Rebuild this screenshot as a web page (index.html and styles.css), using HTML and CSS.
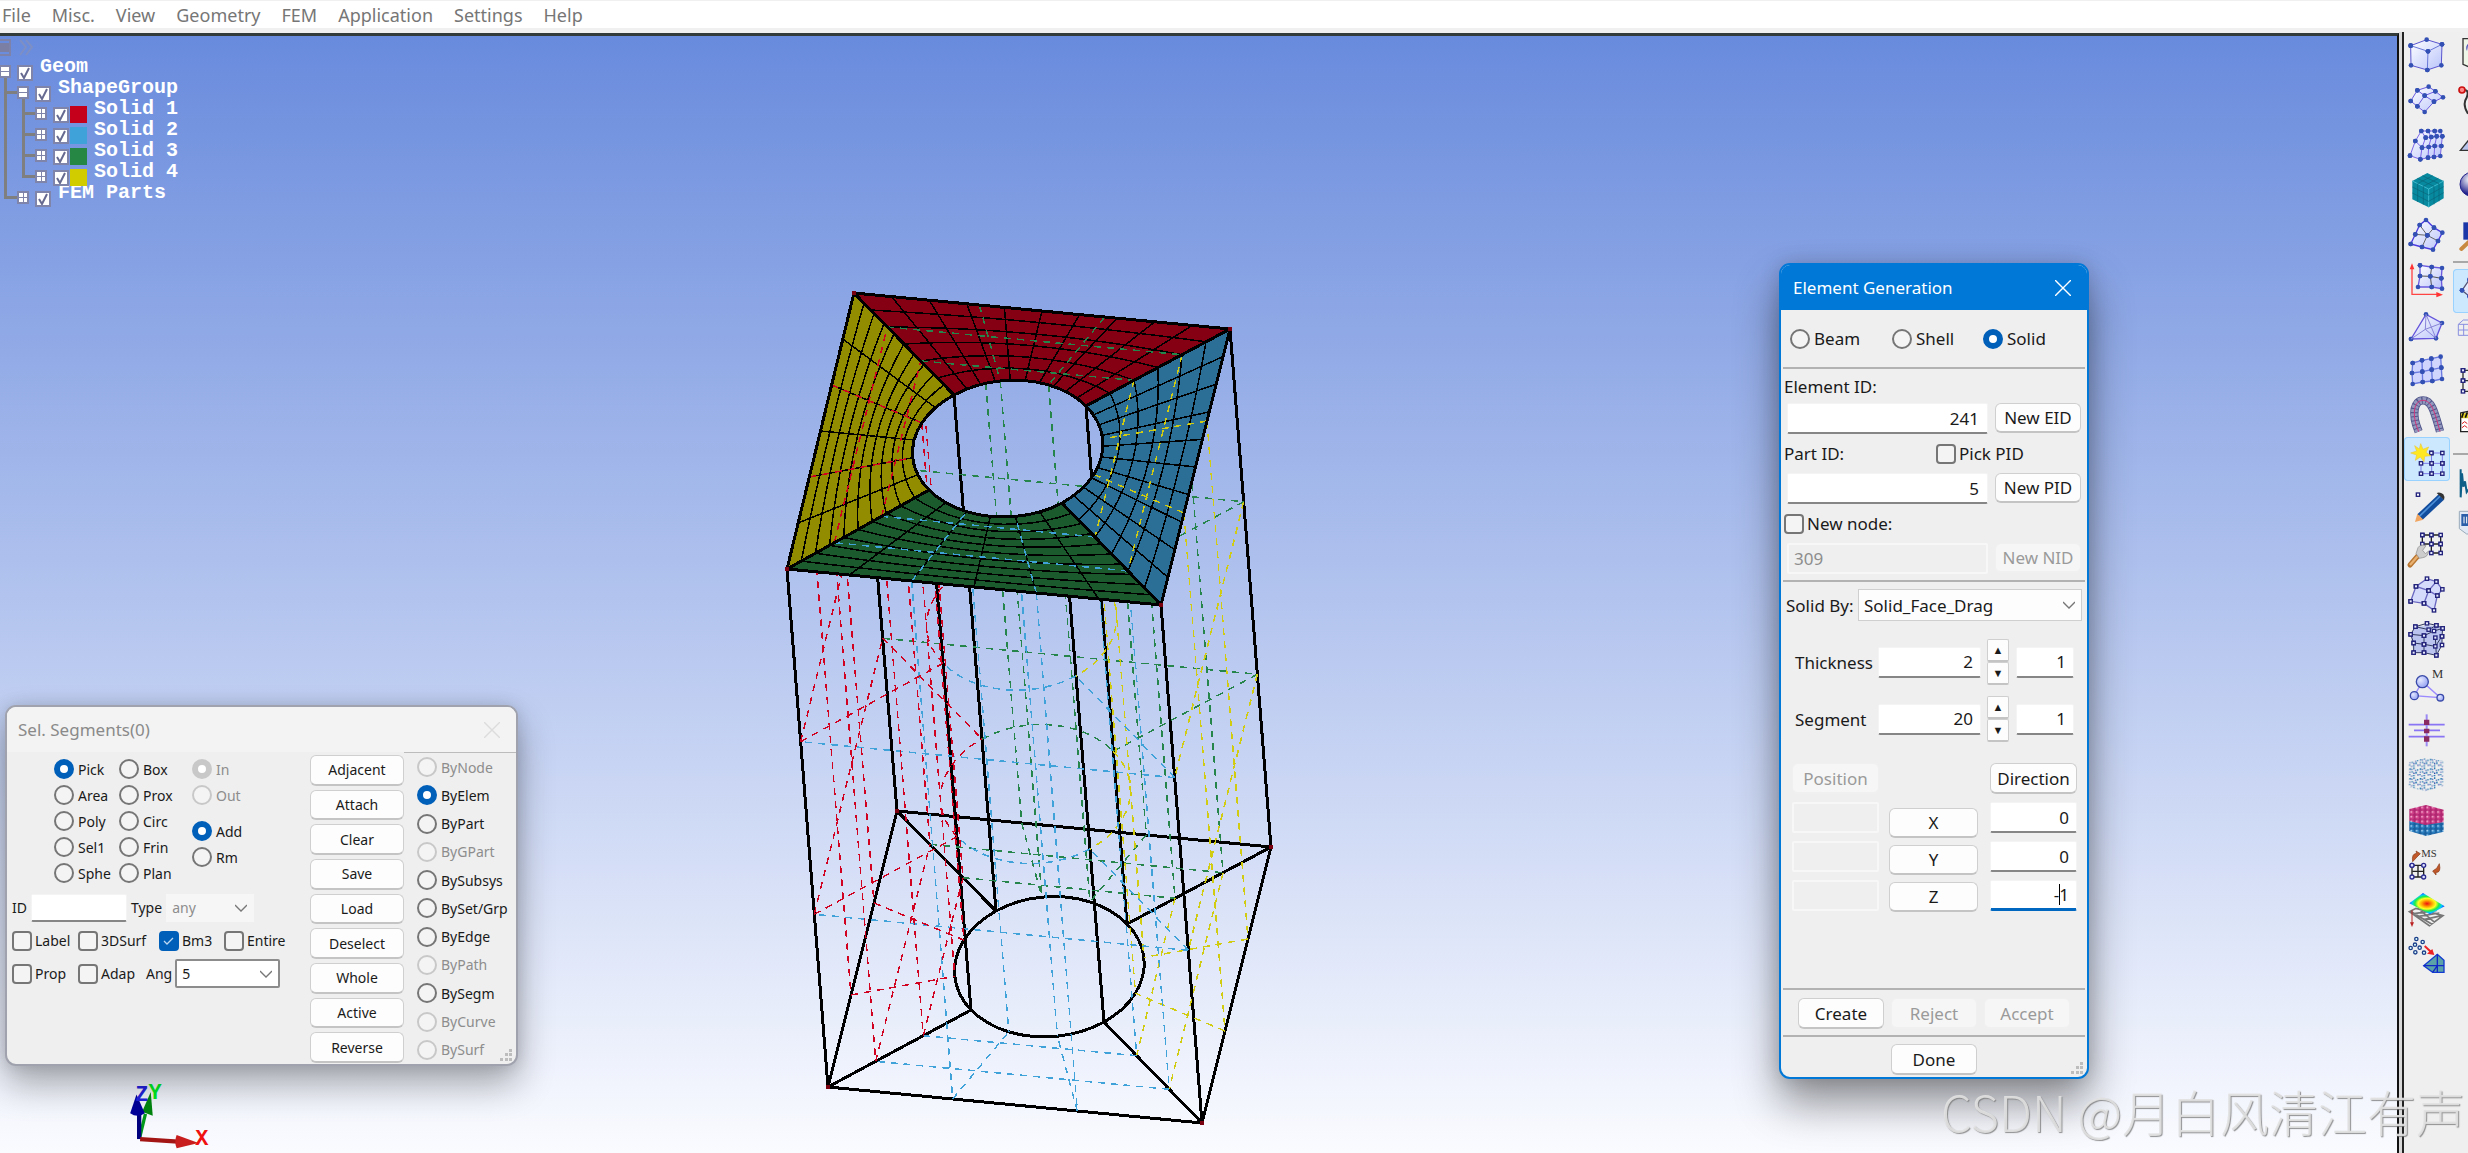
FILE: index.html
```html
<!DOCTYPE html>
<html lang="en">
<head>
<meta charset="utf-8">
<title>Element Generation</title>
<link rel="stylesheet" href="styles.css">
</head>
<body>
<nav class="menubar">
  <a href="#">File</a><a href="#">Misc.</a><a href="#">View</a><a href="#">Geometry</a><a href="#">FEM</a><a href="#">Application</a><a href="#">Settings</a><a href="#">Help</a>
</nav>
<div class="workspace">
  <main class="viewport">
    <svg class="model" id="model" viewBox="770 270 520 870" width="520" height="870" aria-label="Model"></svg>

    <div class="tree">
      <svg class="tree-head" width="36" height="21" viewBox="0 0 36 21" aria-hidden="true">
        <path d="M0 2H10V17H0" fill="none" stroke="#7d82ab" stroke-width="2"/><path d="M0 5H9V14H0Z" fill="#7b7fa3"/>
        <path d="M20 2l6 7-6 8M26 2l6 7-6 8" fill="none" stroke="#7d8fc4" stroke-width="2"/>
      </svg>
      <ul>
        <li class="branch"><div class="node"><i class="twist minus"></i><input type="checkbox" id="t1" checked><label for="t1">Geom</label></div>
          <ul>
            <li class="branch"><div class="node"><i class="twist minus"></i><input type="checkbox" id="t2" checked><label for="t2">ShapeGroup</label></div>
              <ul>
                <li><div class="node"><i class="twist"></i><input type="checkbox" id="t3" checked><b class="chip red"></b><label for="t3">Solid 1</label></div></li>
                <li><div class="node"><i class="twist"></i><input type="checkbox" id="t4" checked><b class="chip blue"></b><label for="t4">Solid 2</label></div></li>
                <li><div class="node"><i class="twist"></i><input type="checkbox" id="t5" checked><b class="chip green"></b><label for="t5">Solid 3</label></div></li>
                <li><div class="node"><i class="twist"></i><input type="checkbox" id="t6" checked><b class="chip yellow"></b><label for="t6">Solid 4</label></div></li>
              </ul>
            </li>
            <li><div class="node"><i class="twist"></i><input type="checkbox" id="t7" checked><label for="t7">FEM Parts</label></div></li>
          </ul>
        </li>
      </ul>
    </div>

    <svg class="triad" viewBox="360 1130 300 220" width="100" height="73" aria-label="Axes">
      <path d="M418 1312L436 1238" stroke="#009a1a" stroke-width="10"/><path d="M452 1172L426 1232L458 1244Z" fill="#00860f"/>
      <path d="M417 1314V1230" stroke="#00007e" stroke-width="13"/><path d="M409 1180L390 1236Q412 1252 434 1236Z" fill="#00009a"/>
      <path d="M420 1314L534 1322" stroke="#a31515" stroke-width="13"/><path d="M596 1326L530 1302Q522 1322 530 1342Z" fill="#c81e1e"/>
      <text x="405" y="1198" fill="#2222dd">Z</text><text x="445" y="1194" fill="#00ee22">Y</text><text x="586" y="1332" fill="#f01010">X</text>
    </svg>

    <section class="window seg-window">
      <header class="titlebar"><h2>Sel. Segments(0)</h2>
        <button class="close" aria-label="Close"><svg width="16" height="16" viewBox="0 0 16 16"><path d="M0 0L16 16M16 0L0 16"/></svg></button></header>
      <form class="seg-body">
        <div class="seg-left">
          <div class="modes">
            <div class="stack">
              <label><input type="radio" name="pick" checked>Pick</label><label><input type="radio" name="pick">Area</label><label><input type="radio" name="pick">Poly</label><label><input type="radio" name="pick">Sel1</label><label><input type="radio" name="pick">Sphe</label>
            </div>
            <div class="stack">
              <label><input type="radio" name="pick">Box</label><label><input type="radio" name="pick">Prox</label><label><input type="radio" name="pick">Circ</label><label><input type="radio" name="pick">Frin</label><label><input type="radio" name="pick">Plan</label>
            </div>
            <div class="stack">
              <label class="off"><input type="radio" name="io" checked disabled>In</label><label class="off"><input type="radio" name="io" disabled>Out</label>
              <label class="second"><input type="radio" name="op" checked>Add</label><label><input type="radio" name="op">Rm</label>
            </div>
          </div>
          <div class="line id-line"><label for="sid">ID</label><input class="field" type="text" id="sid"><label for="stype">Type</label><select id="stype" disabled><option>any</option></select></div>
          <div class="line checks"><label><input type="checkbox">Label</label><label><input type="checkbox">3DSurf</label><label><input type="checkbox" checked>Bm3</label><label><input type="checkbox">Entire</label></div>
          <div class="line checks"><label><input type="checkbox">Prop</label><label><input type="checkbox">Adap</label><span class="ang"><label for="ang">Ang</label><select id="ang"><option>5</option></select></span></div>
        </div>
        <div class="seg-buttons">
          <button type="button">Adjacent</button><button type="button">Attach</button><button type="button">Clear</button><button type="button">Save</button><button type="button">Load</button><button type="button">Deselect</button><button type="button">Whole</button><button type="button">Active</button><button type="button">Reverse</button>
        </div>
        <div class="seg-by">
          <label class="off"><input type="radio" name="by" disabled>ByNode</label><label><input type="radio" name="by" checked>ByElem</label><label><input type="radio" name="by">ByPart</label><label class="off"><input type="radio" name="by" disabled>ByGPart</label><label><input type="radio" name="by">BySubsys</label><label><input type="radio" name="by">BySet/Grp</label><label><input type="radio" name="by">ByEdge</label><label class="off"><input type="radio" name="by" disabled>ByPath</label><label><input type="radio" name="by">BySegm</label><label class="off"><input type="radio" name="by" disabled>ByCurve</label><label class="off"><input type="radio" name="by" disabled>BySurf</label>
        </div>
      </form>
      <svg class="grip" width="12" height="12" viewBox="0 0 12 12"><path d="M9 0h3v3H9zM5 4h3v3H5zM9 4h3v3H9zM0 9h3v3H0zM5 9h3v3H5zM9 9h3v3H9z"/></svg>
    </section>

    <section class="window elem-window">
      <header class="titlebar"><h2>Element Generation</h2>
        <button class="close" aria-label="Close"><svg width="16" height="16" viewBox="0 0 16 16"><path d="M0 0L16 16M16 0L0 16"/></svg></button></header>
      <form class="elem-body">
        <div class="kinds"><label><input type="radio" name="kind">Beam</label><label><input type="radio" name="kind">Shell</label><label><input type="radio" name="kind" checked>Solid</label></div>
        <hr>
        <div class="caption"><label for="eid">Element ID:</label></div>
        <div class="entry"><input class="field" type="text" id="eid" value="241"><button type="button">New EID</button></div>
        <div class="caption part"><label for="pid">Part ID:</label><label><input type="checkbox">Pick PID</label></div>
        <div class="entry"><input class="field" type="text" id="pid" value="5"><button type="button">New PID</button></div>
        <div class="caption part"><label><input type="checkbox">New node:</label></div>
        <div class="entry"><input class="field nid" type="text" value="309" aria-label="Node ID" disabled><button type="button" disabled>New NID</button></div>
        <hr class="after-entry">
        <div class="solid-by"><label for="sby">Solid By:</label><select id="sby"><option>Solid_Face_Drag</option></select></div>
        <div class="amount"><label for="thk">Thickness</label><input class="field" type="text" id="thk" value="2"><span class="spin"><button type="button" aria-label="Up">▲</button><button type="button" aria-label="Down">▼</button></span><input class="field step" type="text" value="1" aria-label="Thickness step"></div>
        <div class="amount"><label for="sgm">Segment</label><input class="field" type="text" id="sgm" value="20"><span class="spin"><button type="button" aria-label="Up">▲</button><button type="button" aria-label="Down">▼</button></span><input class="field step" type="text" value="1" aria-label="Segment step"></div>
        <div class="vector">
          <div class="vcol"><button type="button" disabled>Position</button><input class="field" type="text" aria-label="Position X" disabled><input class="field" type="text" aria-label="Position Y" disabled><input class="field" type="text" aria-label="Position Z" disabled></div>
          <div class="vcol axes"><button type="button">X</button><button type="button">Y</button><button type="button">Z</button></div>
          <div class="vcol"><button type="button">Direction</button><input class="field" type="text" value="0" aria-label="Direction X"><input class="field" type="text" value="0" aria-label="Direction Y"><span class="active-field"><input class="field" type="text" value="-1" aria-label="Direction Z"></span></div>
        </div>
        <hr>
        <div class="actions"><button type="button">Create</button><button type="button" disabled>Reject</button><button type="button" disabled>Accept</button></div>
        <hr>
        <div class="actions done"><button type="button">Done</button></div>
      </form>
      <svg class="grip" width="12" height="12" viewBox="0 0 12 12"><path d="M9 0h3v3H9zM5 4h3v3H5zM9 4h3v3H9zM0 9h3v3H0zM5 9h3v3H5zM9 9h3v3H9z"/></svg>
    </section>
  </main>

  <aside class="toolbars">
    <svg width="0" height="0" class="defs" aria-hidden="true"><defs>
      <marker id="dot" markerUnits="userSpaceOnUse" viewBox="-10 -10 20 20" markerWidth="20" markerHeight="20"><circle r="7" fill="#3350b4"/></marker>
      <marker id="sq" markerUnits="userSpaceOnUse" viewBox="-10 -10 20 20" markerWidth="20" markerHeight="20"><rect x="-5" y="-5" width="10" height="10" fill="#e8ebfb" stroke="#25257e" stroke-width="4"/></marker>
      <marker id="ring" markerUnits="userSpaceOnUse" viewBox="-10 -10 20 20" markerWidth="20" markerHeight="20"><circle r="6" fill="#dfe3ff" stroke="#2a2a90" stroke-width="4"/></marker>
      <linearGradient id="lav" x1="0" y1="0" x2="1" y2="1"><stop offset="0" stop-color="#fff"/><stop offset="1" stop-color="#b9c4fa"/></linearGradient>
      <radialGradient id="ball" cx=".35" cy=".35" r=".7"><stop offset="0" stop-color="#fff"/><stop offset="1" stop-color="#3c3ca8"/></radialGradient>
      <radialGradient id="orb" cx=".4" cy=".3" r=".6"><stop offset="0" stop-color="#fff"/><stop offset="1" stop-color="#20208c"/></radialGradient>
      <radialGradient id="bead" cx=".35" cy=".35" r=".9"><stop offset="0" stop-color="#e4e9ff"/><stop offset="1" stop-color="#7d8ef0"/></radialGradient>
      <radialGradient id="heat"><stop offset="0" stop-color="#e11"/><stop offset=".3" stop-color="#fa0"/><stop offset=".5" stop-color="#ff2"/><stop offset=".68" stop-color="#2e4"/><stop offset=".85" stop-color="#0cf"/><stop offset="1" stop-color="#14f"/></radialGradient>
      <pattern id="specks" width="31" height="29" patternUnits="userSpaceOnUse"><path d="M2 3h5v5H2zM14 1h4v5h-4zM25 6h4v4h-4zM8 12h5v4H8zM20 14h5v5h-5zM1 20h4v4H1zM13 23h5v4h-5z" fill="#1f76b0"/><path d="M8 5h4v3H8zM19 8h4v3h-4zM2 13h3v4H2zM14 16h4v4h-4zM26 21h4v4h-4zM7 25h3v3H7z" fill="#2440a8"/></pattern>
      <pattern id="pinkballs" width="16" height="14" patternUnits="userSpaceOnUse"><rect width="16" height="14" fill="#b02670"/><circle cx="8" cy="7" r="6" fill="#cf3f88"/><circle cx="6" cy="5" r="3" fill="#f3a8cb"/></pattern>
      <pattern id="blueballs" width="16" height="14" patternUnits="userSpaceOnUse"><rect width="16" height="14" fill="#1a5f9e"/><circle cx="8" cy="7" r="6" fill="#2a80c0"/><circle cx="6" cy="5" r="3" fill="#9ccbef"/></pattern>
    </defs></svg>
    <div class="tools">
      <button aria-label="Solid"><svg viewBox="48 33 138 132"><path class="d" d="M68 74L116 56L162 70L160 133L118 147L69 133Z" fill="url(#lav)" stroke="#5a55d0" stroke-width="3"/><path class="d" d="M68 74L120 91L162 70M120 91L118 147" fill="none" stroke="#6a78d8" stroke-width="3"/></svg></button>
      <button aria-label="Surface"><svg viewBox="48 168 138 132"><path class="d" d="M68 240L88 208L122 197L142 211L165 229L138 242L110 273L88 256Z" fill="url(#lav)" stroke="#6a5ae0" stroke-width="3"/><path class="d" d="M88 208L110 224L138 242M88 256L110 224L142 211" fill="none" stroke="#6a5ae0" stroke-width="3"/></svg></button>
      <button aria-label="Block mesh"><svg viewBox="48 303 138 132"><path class="d" d="M66 404L82 360L100 330L120 330L140 330L157 330L163 346L160 375L157 405L138 408L120 410L97 415Z" fill="url(#lav)" stroke="#7a64e8" stroke-width="3"/><path class="d" d="M82 360L102 380L122 378L140 375L160 375M100 330L113 350L130 348L146 346L163 346M97 415L102 380L113 350M120 410L122 378L130 348L120 330M138 408L140 375L146 346L140 330" fill="none" stroke="#7a64e8" stroke-width="3"/></svg></button>
      <button aria-label="Hexa block"><svg viewBox="48 438 138 132"><path d="M73 480L118 456L167 480V532L122 559L73 535Z" fill="#07899f"/><path d="M73 480L122 504L167 480M122 504V559" fill="none" stroke="#3bb8cc" stroke-width="3"/><path d="M88 472L138 496M103 464L153 488M89 488L134 464M106 496L151 472M73 498L122 522L167 497M73 516L122 541L167 515M89 488V543M106 496V551M138 496V550M153 488V541" stroke="#0a6578" stroke-width="2" fill="none"/></svg></button>
      <button aria-label="Patch"><svg viewBox="48 573 138 132"><path class="d" d="M68 669L82 640L95 612L114 597L138 620L163 635L150 660L135 686L102 678Z" fill="url(#lav)" stroke="#4a3ae0" stroke-width="4"/><path class="d" d="M95 612L118 643L150 660M118 643L102 678M138 620L118 643L82 640" fill="none" stroke="#666" stroke-width="3"/></svg></button>
      <button aria-label="Mesh on axes"><svg viewBox="48 708 138 132"><path class="d" d="M96 733L131 738L162 741L160 772L162 803L131 798L90 798L96 765Z" fill="url(#lav)" stroke="#6a5ae0" stroke-width="4"/><path class="d" d="M96 765L127 766L160 772M131 738L127 766L131 798" fill="none" stroke="#555" stroke-width="3"/><path d="M72 740V820H148" fill="none" stroke="#f44" stroke-width="4"/><path d="M72 727l-7 18h14zM165 821l-20-8v16z" fill="#f33"/></svg></button>
      <button aria-label="Tetra"><svg viewBox="48 843 138 132"><path class="d" d="M69 954L114 880L162 906L144 952Z" fill="url(#lav)" stroke="#6454dc" stroke-width="4"/><path d="M69 954L112 925L162 906M114 880L144 952M114 880L112 925L144 952" fill="none" stroke="#8a86d8" stroke-width="3"/></svg></button>
      <button aria-label="Shell mesh"><svg viewBox="48 18 138 132"><path class="d" d="M74 66L102 58L130 53L158 47L160 80L162 114L133 120L104 123L74 129L72 96Z" fill="#cfd5fd" stroke="#6a7ae0" stroke-width="4"/><path class="d" d="M72 96L103 92L131 86L160 80M102 58L103 92L104 123M130 53L131 86L133 120" fill="none" stroke="#6a7ae0" stroke-width="4"/></svg></button>
      <button aria-label="Pipe"><svg viewBox="48 153 138 132"><path d="M92 272C68 215 80 178 105 178C132 178 140 215 156 271" fill="none" stroke="#50558a" stroke-width="25"/><path d="M92 272C68 215 80 178 105 178C132 178 140 215 156 271" fill="none" stroke="#9297bd" stroke-width="20" stroke-dasharray="9 3"/><path d="M92 272C68 215 80 178 105 178C132 178 140 215 156 271" fill="none" stroke="#d2347a" stroke-width="3"/></svg></button>
      <button class="on" aria-label="Element generation"><svg viewBox="48 288 138 132"><path class="s" d="M130 336L163 336L163 367L163 398L131 398L99 398L99 367L131 367L163 367M130 336L131 367L131 398" fill="none" stroke="#7b7be8" stroke-width="3"/><path d="M98 308L105 325L122 318L114 334L128 344L110 346L108 362L97 348L82 358L86 342L68 336L86 330L80 314L94 324Z" fill="#ffe820" stroke="#e8c840" stroke-width="2"/></svg></button>
      <button aria-label="Edit node"><svg viewBox="48 423 138 132"><rect x="85" y="456" width="10" height="10" fill="#fff" stroke="#25257e" stroke-width="4"/><path d="M152 460L168 476L104 536L88 520Z" fill="#124c9c"/><path d="M157 465L94 526" stroke="#4b8fd8" stroke-width="5"/><path d="M146 456Q156 452 166 460Q172 468 168 477Z" fill="#333"/><path d="M88 518L81 543L106 536Z" fill="#f0a560"/></svg></button>
      <button aria-label="Repair mesh"><svg viewBox="48 558 138 132"><path class="s" d="M103 582L130 582L158 582L158 609L158 636L130 636L130 609L158 609M103 582L103 609L130 609L130 582" fill="none" stroke="#222" stroke-width="4"/><path d="M66 672L92 642" stroke="#b87530" stroke-width="15" stroke-linecap="round"/><path d="M66 672L92 642" stroke="#e8b070" stroke-width="7"/><path d="M84 638L90 620Q98 608 114 614L104 628L112 638L122 630Q120 648 104 650L94 652Z" fill="#ccc" stroke="#888" stroke-width="2"/></svg></button>
      <button aria-label="Shell patch"><svg viewBox="48 693 138 132"><path class="s" d="M68 781L84 736L117 713L145 722L163 745L148 764L138 808L108 787Z" fill="#d5dbfb" stroke="#6a68c0" stroke-width="4"/><path class="s" d="M84 736L122 749L148 764M122 749L108 787M122 749L145 722" fill="none" stroke="#6a68c0" stroke-width="4"/></svg></button>
      <button aria-label="Solid mesh"><svg viewBox="48 828 138 132"><path d="M77 935L68 880L82 857L145 853L164 862L162 912L145 943L108 935Z" fill="#bac4ee"/><path class="s" d="M77 935L77 906L68 880L82 857L117 847L145 853L164 862L162 886L162 912L145 943L108 935L77 935M68 880L108 884L138 870L164 862M108 935L108 910L108 884M77 906L108 910L142 916L162 886M145 943L142 890M82 857L122 866L145 853" fill="none" stroke="#333a60" stroke-width="3"/></svg></button>
      <button aria-label="Mass"><svg viewBox="48 3 138 132"><path d="M103 62L79 104L157 110Z" fill="none" stroke="#9b8bff" stroke-width="4"/><g fill="url(#bead)" stroke="#3a4aa8" stroke-width="4"><circle cx="103" cy="62" r="18"/><circle cx="79" cy="104" r="12"/><circle cx="157" cy="110" r="10"/></g><text x="132" y="52" font-size="38">M</text></svg></button>
      <button aria-label="Align"><svg viewBox="48 138 138 132"><path d="M62 191H170M78 208H156M62 227H170" stroke="#8a76f4" stroke-width="5"/><path d="M116 160V256" stroke="#9b8bf4" stroke-width="6"/><path d="M108 176h16v16h-16zM108 203h16v14h-16zM108 226h16v16h-16z" fill="#8a2a62"/></svg></button>
      <button aria-label="Particles"><svg viewBox="48 273 138 132"><path d="M62 303L118 290L166 300V376L112 391L62 378Z" fill="url(#specks)"/></svg></button>
      <button aria-label="Layers"><svg viewBox="48 408 138 132"><path d="M64 444L114 432L167 446V484L112 494L64 480Z" fill="url(#pinkballs)"/><path d="M64 480L112 492L167 484V512L114 525L64 510Z" fill="url(#blueballs)"/></svg></button>
      <button aria-label="Mesh swap"><svg viewBox="48 543 138 132"><path d="M74 602Q70 578 86 577L84 570L97 578L87 588Z" fill="#c0582a" stroke="#8a3a15" stroke-width="2"/><path d="M154 608Q160 636 144 634L144 642L134 630L146 622Z" fill="#c0582a" stroke="#8a3a15" stroke-width="2"/><path d="M90 614V648M73 631H107" stroke="#222" stroke-width="4"/><path class="r" d="M72 613L107 613L107 648L72 648Z" fill="none" stroke="#222" stroke-width="4"/><text x="100" y="588" font-size="32">MS</text></svg></button>
      <button aria-label="Contour"><svg viewBox="48 678 138 132"><path d="M64 752L84 742L165 764L124 794ZM78 758L146 748M92 766L154 756M106 776L162 764M90 742L140 784M70 752L132 790" fill="none" stroke="#777" stroke-width="5"/><path d="M105 696L170 736L126 760L64 727Z" fill="url(#heat)"/><path d="M72 748V788" stroke="#b22" stroke-width="3"/><path d="M72 798l-6-14h12z" fill="#b22"/></svg></button>
      <button aria-label="Points to mesh"><svg viewBox="48 813 138 132"><g fill="#dff" stroke="#1d3f8a" stroke-width="4"><circle cx="85" cy="834" r="5"/><circle cx="104" cy="843" r="5"/><circle cx="81" cy="851" r="5"/><circle cx="68" cy="861" r="5"/><circle cx="95" cy="860" r="5"/><circle cx="82" cy="874" r="5"/><circle cx="108" cy="875" r="5"/></g><path d="M110 855L130 874" stroke="#e22" stroke-width="6"/><path d="M139 882l-22-4 16-14z" fill="#e22"/><path d="M107 914L148 880L168 898V934H134Z" fill="#5aa2a8" stroke="#123ad0" stroke-width="4"/><path d="M107 914H168M148 880V934M148 914L134 934" fill="none" stroke="#1226c8" stroke-width="4"/></svg></button>
    </div>
    <div class="tools">
      <button aria-label="View"><svg viewBox="195 33 138 132"><path d="M300 53H225V130L252 142" fill="#eef6e8" stroke="#333" stroke-width="4"/><path d="M240 68q-8 8-3 22" fill="#22a" /></svg></button>
      <button aria-label="Curve"><svg viewBox="195 168 138 132"><path d="M222 208Q246 202 236 230Q222 250 240 278" fill="none" stroke="#333" stroke-width="6"/><circle cx="222" cy="207" r="9" fill="#f88" stroke="#c11" stroke-width="5"/></svg></button>
      <button aria-label="Plane"><svg viewBox="195 303 138 132"><path d="M217 388L246 352L300 388Z" fill="#b9c4ec" stroke="#333" stroke-width="4"/></svg></button>
      <button aria-label="Sphere"><svg viewBox="195 438 138 132"><circle cx="252" cy="490" r="36" fill="url(#orb)" stroke="#26268c" stroke-width="3"/></svg></button>
      <button aria-label="Measure"><svg viewBox="195 573 138 132"><path d="M226 604H300V656H226Z" fill="#1c38a8"/><path d="M220 684L246 660" stroke="#c88a40" stroke-width="12" stroke-linecap="round"/></svg></button>
      <hr>
      <button class="on" aria-label="Mesh"><svg viewBox="195 744 138 132"><path class="d" d="M222 808L244 776L280 800L244 826Z" fill="url(#lav)" stroke="#557" stroke-width="4"/></svg></button>
      <button aria-label="Cage"><svg viewBox="195 879 138 132"><path d="M211 910H260M211 910V943H260M211 927H260M227 910V943M211 910L226 897H260" fill="none" stroke="#8a90e0" stroke-width="3"/></svg></button>
      <button aria-label="Nodes"><svg viewBox="195 54 138 132"><path class="s" d="M225 88L260 88M225 88L225 119L260 119M225 119L225 151L260 151" fill="none" stroke="#333" stroke-width="4"/></svg></button>
      <button aria-label="Animation"><svg viewBox="195 189 138 132"><path d="M218 216L246 210V272H218Z" fill="#fff" stroke="#222" stroke-width="4"/><path d="M219 232V218L244 214V232Z" fill="#dc2"/><path d="M226 216l-5 14M238 214l-6 16" stroke="#111" stroke-width="5"/><path d="M222 248l8-6 8 6M222 260l8-6 8 6" fill="none" stroke="#d22" stroke-width="3"/></svg></button>
      <hr>
      <button aria-label="Plot"><svg viewBox="195 363 138 132"><path d="M218 388V472L222 400L226 440L231 424L236 456L244 446" fill="none" stroke="#0d5f88" stroke-width="6"/></svg></button>
      <button aria-label="Report"><svg viewBox="195 498 138 132"><path d="M214 514H260V582H236L214 566Z" fill="#dfe8f4" stroke="#9ab" stroke-width="3"/><path d="M220 522H260V558H220Z" fill="#2a5ea8"/><path d="M228 530v20M236 530v20" stroke="#fff" stroke-width="3"/></svg></button>
    </div>
  </aside>
</div>
<div class="watermark">CSDN @月白风清江有声</div>
<script src="model.js"></script>
</body>
</html>
```
FILE: styles.css
```css
* { box-sizing: border-box; }
body {
  margin: 0;
  height: 100vh;
  overflow: hidden;
  position: relative;
  display: flex;
  flex-direction: column;
  background: #f0f0f0;
  color: #1a1a1a;
  font-family: "Noto Sans", "Open Sans", sans-serif;
}
ul { list-style: none; margin: 0; padding: 0; }
button, input, select { font: inherit; color: inherit; margin: 0; }

.menubar {
  height: 28px;
  display: flex;
  align-items: center;
  gap: 21px;
  padding: 1px 2px 0;
  background: #fff;
  border-top: 1px solid #f0f0f0;
  font-size: 18px;
}
.menubar a { color: #767676; text-decoration: none; }

.workspace { flex: 1; min-height: 0; display: flex; margin-top: 5px; }
.viewport {
  flex: 1;
  position: relative;
  overflow: hidden;
  border-top: 3px solid #333a3a;
  border-right: 2px solid #111;
  background: linear-gradient(#698bdd, #fafbff);
}

/* model tree */
.tree { position: absolute; left: 0; top: 2px; color: #fff; font: bold 20px/21px "Liberation Mono", monospace; }
.tree-head { display: block; }
.node { display: flex; height: 21px; align-items: flex-start; }
.tree label { margin-left: 7px; margin-top: -3px; }
.tree .branch { position: relative; }
.tree ul ul { padding-left: 18px; }
.tree > ul { margin-left: -1px; }
.twist {
  width: 12px; height: 13px; margin: 6px 6px 0 0;
  border: 2px solid #7f84aa;
  background: linear-gradient(#7f84aa, #7f84aa) center / 100% 1px no-repeat, linear-gradient(#7f84aa, #7f84aa) center / 1px 100% no-repeat, #fff;
  position: relative;
}
.twist.minus { background: linear-gradient(#7f84aa, #7f84aa) center / 100% 1px no-repeat, #fff; }
.twist::before { content: ""; position: absolute; right: 10px; top: 3px; width: 11px; height: 3px; background: #7f7f80; }
.tree > ul > li > .node .twist::before { display: none; }
.branch > ul { position: relative; }
.branch > ul::before { content: ""; position: absolute; left: 5px; top: -2px; bottom: 7px; width: 3px; background: #7f7f80; }
.tree input {
  appearance: none;
  width: 16px; height: 16px; margin-top: 6px;
  border: 2px solid #7f84aa;
  background: #fff url("data:image/svg+xml,%3Csvg xmlns='http://www.w3.org/2000/svg' viewBox='0 0 12 12'%3E%3Cpath d='M2 6l3 5 5-10' fill='none' stroke='%23666a90' stroke-width='2'/%3E%3C/svg%3E") center / 100% 100%;
}
.chip { width: 17px; height: 17px; margin: 5px 0 0 1px; }
.chip.red { background: #c4001a; }
.chip.blue { background: #3fa2d8; }
.chip.green { background: #268644; }
.chip.yellow { background: #d0cc00; }

.model { position: absolute; left: 770px; top: 234px; shape-rendering: crispEdges; fill: none; }
.model .edge { stroke: #000; stroke-width: 3; }
.model .grid { stroke: #000; stroke-width: 1.5; }
.model .dash { stroke-width: 1.5; stroke-dasharray: 7 6; }
.triad { position: absolute; left: 120px; bottom: 2px; }
.triad text { font: bold 66px "Liberation Mono", monospace; }

/* windows */
.window { position: absolute; display: flex; flex-direction: column; border-radius: 11px; overflow: hidden; background: #efefef; }
.titlebar { height: 47px; display: flex; align-items: center; justify-content: space-between; }
.titlebar h2 { margin: 0; font-size: 17px; font-weight: 400; }
.close { border: 0; background: none; padding: 0 16px; display: flex; }
.close path { stroke: currentColor; stroke-width: 1.4; }
.grip { position: absolute; right: 4px; bottom: 3px; fill: #bdbdbd; }

.window label { display: flex; align-items: center; white-space: nowrap; }
.window .off { color: #8d8d8d; }
input[type=radio], .window input[type=checkbox] { appearance: none; flex: none; width: 20px; height: 20px; margin: 0 4px 0 0; border: 2px solid #767676; background: #f4f4f4; }
input[type=radio] { border-radius: 50%; }
input[type=radio]:checked { border: 6px solid #005fb8; background: #fff; }
input[type=radio]:disabled { border-color: #c8c8c8; }
.window input[type=checkbox] { border-radius: 4px; margin-right: 3px; }
.window input[type=checkbox]:checked {
  border-color: #005fb8;
  background: #005fb8 url("data:image/svg+xml,%3Csvg xmlns='http://www.w3.org/2000/svg' viewBox='0 0 16 16'%3E%3Cpath d='M3 8l3 3 6-6' fill='none' stroke='%23bcd8f2' stroke-width='1.3'/%3E%3C/svg%3E");
}
.window form button { border: 1px solid #cfcfcf; border-bottom: 2px solid #c4c4c4; border-radius: 6px; background: #fdfdfd; padding: 0; }
.window form button:disabled { color: #9a9a9a; background: #f6f6f6; border-color: #f0f0f0; }
.field { border: 1px solid #f4f4f4; border-bottom: 2px solid #868686; border-radius: 2px; background: #fff; min-width: 0; outline: 0; }
.field:disabled { background: #efefef; border: 2px solid #f7f7f7; color: #8d8d8d; }
.window select {
  appearance: none;
  border: 1px solid #cfcfcf;
  background: #fdfdfd url("data:image/svg+xml,%3Csvg xmlns='http://www.w3.org/2000/svg' viewBox='0 0 12 8'%3E%3Cpath d='M0 1l6 6 6-6' fill='none' stroke='%23777' stroke-width='1.3'/%3E%3C/svg%3E") right 6px center / 12px 8px no-repeat;
  padding: 0 5px;
}
.window select:disabled { color: #8d8d8d; background-color: #f6f6f6; border-color: #f6f6f6; opacity: 1; }

.seg-window {
  left: 5px; bottom: 87px; width: 513px; height: 361px;
  border: 2px solid #a0a3ae;
  font-size: 14px;
  box-shadow: 0 18px 36px rgba(0, 0, 0, .32), 0 0 16px rgba(0, 0, 0, .12);
}
.seg-window .titlebar { background: #f3f3f3; color: #8a8a8a; padding-left: 11px; height: 45px; }
.seg-window .close { color: #dcdcdc; }
.seg-body { flex: 1; display: flex; min-height: 0; }
.seg-left { width: 303px; display: flex; flex-direction: column; padding: 4px 0 0 5px; }
.modes { display: flex; padding-left: 42px; height: 130px; margin-bottom: 5px; }
.stack { width: 65px; display: flex; flex-direction: column; }
.stack + .stack + .stack { margin-left: 8px; }
.stack label { height: 26px; }
.stack .second { margin-top: 10px; }
.line { display: flex; align-items: center; height: 33px; }
.id-line .field { width: 96px; height: 28px; margin: 0 4px; }
.id-line select { width: 88px; height: 28px; margin-left: 4px; }
.checks { display: grid; grid-template-columns: 66px 81px 65px auto; }
.ang { display: flex; grid-column: 3 / span 2; margin-left: -13px; gap: 3px; }
.ang select { width: 105px; height: 29px; border: 2px solid #8c8c8c; border-radius: 2px; background-color: #fff; }
.seg-buttons { width: 94px; display: flex; flex-direction: column; gap: 4px; padding: 3px 0 1px; }
.seg-buttons button { flex: 1; }
.seg-by { flex: 1; padding-left: 13px; display: flex; flex-direction: column; border-top: 1px solid #bcbcbc; }
.seg-by label { flex: 1; }

.elem-window {
  right: 308px; top: 227px; width: 310px;
  border: 2px solid #0078d7;
  font-size: 17px;
  box-shadow: 0 24px 44px rgba(0, 0, 0, .42), 0 0 20px rgba(0, 0, 0, .15);
}
.elem-window .titlebar { background: #0078d7; color: #fff; height: 45px; padding-left: 12px; }
.elem-body { display: flex; flex-direction: column; }
.elem-window hr { width: 302px; margin: 0 2px; border: 0; border-top: 2px solid #b2b2b2; }
.kinds { height: 57px; display: grid; grid-template-columns: 102px 91px auto; padding-left: 9px; }
.caption { height: 34px; display: flex; align-items: center; padding-left: 3px; }
.part { height: 39px; display: grid; grid-template-columns: 152px auto; }
.entry { display: flex; gap: 7px; padding-left: 6px; height: 31px; }
.entry .field { width: 201px; text-align: right; padding: 0 8px; }
.entry .nid { text-align: left; padding: 0 5px; }
.entry button { width: 86px; height: 30px; }
.elem-window .after-entry { margin-top: 6px; }
.solid-by { display: flex; height: 32px; margin-top: 7px; padding-left: 5px; }
.solid-by label { width: 72px; }
.solid-by select { width: 224px; }
.amount { display: flex; align-items: center; height: 46px; margin-top: 11px; padding-left: 14px; }
.solid-by + .amount { margin-top: 18px; }
.amount label { width: 83px; }
.amount .field { width: 103px; height: 31px; text-align: right; padding: 0 7px; }
.amount .step { width: 58px; }
.spin { width: 22px; height: 46px; margin: 0 7px 0 6px; display: flex; flex-direction: column; }
.window .spin button { flex: 1; border-radius: 2px; font-size: 11px; line-height: 12px; }
.vector { display: flex; padding-left: 11px; margin: 21px 0 76px; height: 149px; }
.vcol { width: 87px; display: flex; flex-direction: column; gap: 8px; }
.vcol > * { height: 31px; width: 100%; }
.vcol .field { text-align: right; padding: 0 7px; height: 31px; width: 100%; }
.axes { width: 89px; margin: 0 12px 0 10px; gap: 7px; justify-content: flex-end; }
.axes button { height: 30px; }
.active-field { position: relative; display: flex; }
.vcol .active-field .field { border-bottom: 3px solid #0067c0; }
.active-field::after { content: ""; position: absolute; right: 17px; top: 4px; width: 1px; height: 21px; background: #000; }
.actions { display: flex; gap: 7px; padding: 8px 17px 0; height: 45px; }
.actions button { width: 86px; height: 31px; }
.done { justify-content: center; height: 40px; padding-top: 7px; }

/* tool columns on the right edge */
.toolbars { width: 69px; display: flex; overflow: hidden; background: linear-gradient(90deg, #d8d8d8 3px, #222 3px, #222 5px, #efefef 5px); padding-left: 5px; margin-top: -1px; }
.defs { position: absolute; }
.tools { width: 46px; flex: none; display: flex; flex-direction: column; margin-right: 3px; gap: 1px; }
.tools button { width: 46px; height: 44px; flex: none; padding: 0; border: 0; background: none; border-radius: 4px; }
.tools button.on { background: #cce8ff; box-shadow: inset 0 0 0 1px #99d1ff; }
.tools svg { display: block; width: 46px; height: 44px; }
.tools text { font-family: "Liberation Serif", serif; fill: #333; }
.tools hr { width: 46px; margin: 4px 0 5px; border: 0; border-top: 2px solid #a8a8a8; }
.d { marker: url(#dot); }
.s { marker: url(#sq); }
.r { marker: url(#ring); }

.watermark {
  position: absolute; right: 3px; bottom: 8px;
  font: 300 49px/68px "Noto Sans CJK SC", sans-serif;
  color: rgba(226, 226, 226, .9);
  text-shadow: 1px 1px 1px rgba(120, 120, 120, .8);
  pointer-events: none;
}
```
FILE: model.js
```js
// Prism with a cylindrical hole, split into four sectors.
// Corners run A, B, C, D clockwise from the upper left; hole points share the order.
const top0 = {
  corner: [[854, 293], [1230, 329], [1161, 605], [787, 569]],
  hole: [[954, 395], [1086, 406], [1062, 503], [929, 490]],
};
const base = {
  corner: [[897, 811], [1271, 847], [1202, 1123], [828, 1087]],
  hole: [[996, 911], [1127, 924], [1104, 1022], [971, 1010]],
};
const sectors = [
  { fill: '#850013', dash: '#26854a', around: 10, radial: 6 },
  { fill: '#2c6f96', dash: '#d2cc10', around: 10, radial: 6 },
  { fill: '#1b5a2d', dash: '#3fa2d8', around: 6, radial: 10 },
  { fill: '#928c00', dash: '#d0021f', around: 6, radial: 10 },
];

const mix = (p, q, t) => [p[0] + (q[0] - p[0]) * t, p[1] + (q[1] - p[1]) * t];
const range = (n) => Array.from({ length: n + 1 }, (_, i) => i / n);
const path = (pts) => 'M' + pts.map((p) => p.map((v) => v.toFixed(1)).join(' ')).join('L');

function edge(level, k, s) {
  return mix(level.corner[k], level.corner[(k + 1) % 4], s);
}
function arc(level, k, s) {
  const h = level.hole;
  const cx = (h[0][0] + h[1][0] + h[2][0] + h[3][0]) / 4;
  const cy = (h[0][1] + h[1][1] + h[2][1] + h[3][1]) / 4;
  const p = h[k], q = h[(k + 1) % 4];
  const a = (s * Math.PI) / 2;
  const c = Math.cos(a), d = Math.sin(a);
  return [cx + (p[0] - cx) * c + (q[0] - cx) * d, cy + (p[1] - cy) * c + (q[1] - cy) * d];
}
const inFace = (level, k, s, t) => mix(edge(level, k, s), arc(level, k, s), t);

const svg = document.getElementById('model');
function draw(pts, cls, attrs = {}) {
  const el = document.createElementNS('http://www.w3.org/2000/svg', 'path');
  el.setAttribute('d', path(pts));
  el.setAttribute('class', cls);
  for (const name in attrs) el.setAttribute(name, attrs[name]);
  svg.appendChild(el);
}
const steps = range(12);
const thirds = [1 / 3, 2 / 3];

function faceDashes(level, k) {
  const stroke = sectors[k].dash;
  for (const f of thirds) {
    draw([inFace(level, k, 0, f), inFace(level, k, 1, f)], 'dash', { stroke });
    draw([inFace(level, k, f, 0), inFace(level, k, f, 1)], 'dash', { stroke });
  }
}
function outline(level) {
  for (let k = 0; k < 4; k++) {
    draw([level.corner[k], level.corner[(k + 1) % 4]], 'edge');
    draw([level.corner[k], level.hole[k]], 'edge');
    draw(steps.map((s) => arc(level, k, s)), 'edge');
  }
}

for (let k = 0; k < 4; k++) {
  draw([top0.corner[k], base.corner[k]], 'edge');
  draw([top0.hole[k], base.hole[k]], 'edge');
}
outline(base);
for (let k = 0; k < 4; k++) {
  const stroke = sectors[k].dash;
  const own = k === 3 ? [0, 1] : k === 0 ? [1] : k === 2 ? [0] : [];
  faceDashes(base, k);
  for (const f of thirds) {
    draw([edge(top0, k, f), edge(base, k, f)], 'dash', { stroke });
    draw([arc(top0, k, f), arc(base, k, f)], 'dash', { stroke });
    draw([mix(edge(top0, k, 0), edge(base, k, 0), f), mix(edge(top0, k, 1), edge(base, k, 1), f)], 'dash', { stroke });
    draw(steps.map((s) => mix(arc(top0, k, s), arc(base, k, s), f)), 'dash', { stroke });
    for (const s of own) {
      draw([inFace(top0, k, s, f), inFace(base, k, s, f)], 'dash', { stroke });
      draw([mix(edge(top0, k, s), edge(base, k, s), f), mix(arc(top0, k, s), arc(base, k, s), f)], 'dash', { stroke });
    }
  }
}

sectors.forEach((sec, k) => {
  const rim = steps.map((s) => arc(top0, k, s)).reverse();
  draw([edge(top0, k, 0), edge(top0, k, 1), ...rim], 'face', { fill: sec.fill });
  for (const s of range(sec.around).slice(1, -1)) draw([inFace(top0, k, s, 0), inFace(top0, k, s, 1)], 'grid');
  for (const t of range(sec.radial).slice(1, -1)) draw(steps.map((s) => inFace(top0, k, s, t)), 'grid');
  faceDashes(top0, k);
});
outline(top0);
for (const level of [top0, base]) {
  for (const p of level.corner) draw([[p[0] - 2, p[1]], [p[0] + 2, p[1]]], 'pin', { stroke: '#7a0010', 'stroke-width': 4 });
}
```
